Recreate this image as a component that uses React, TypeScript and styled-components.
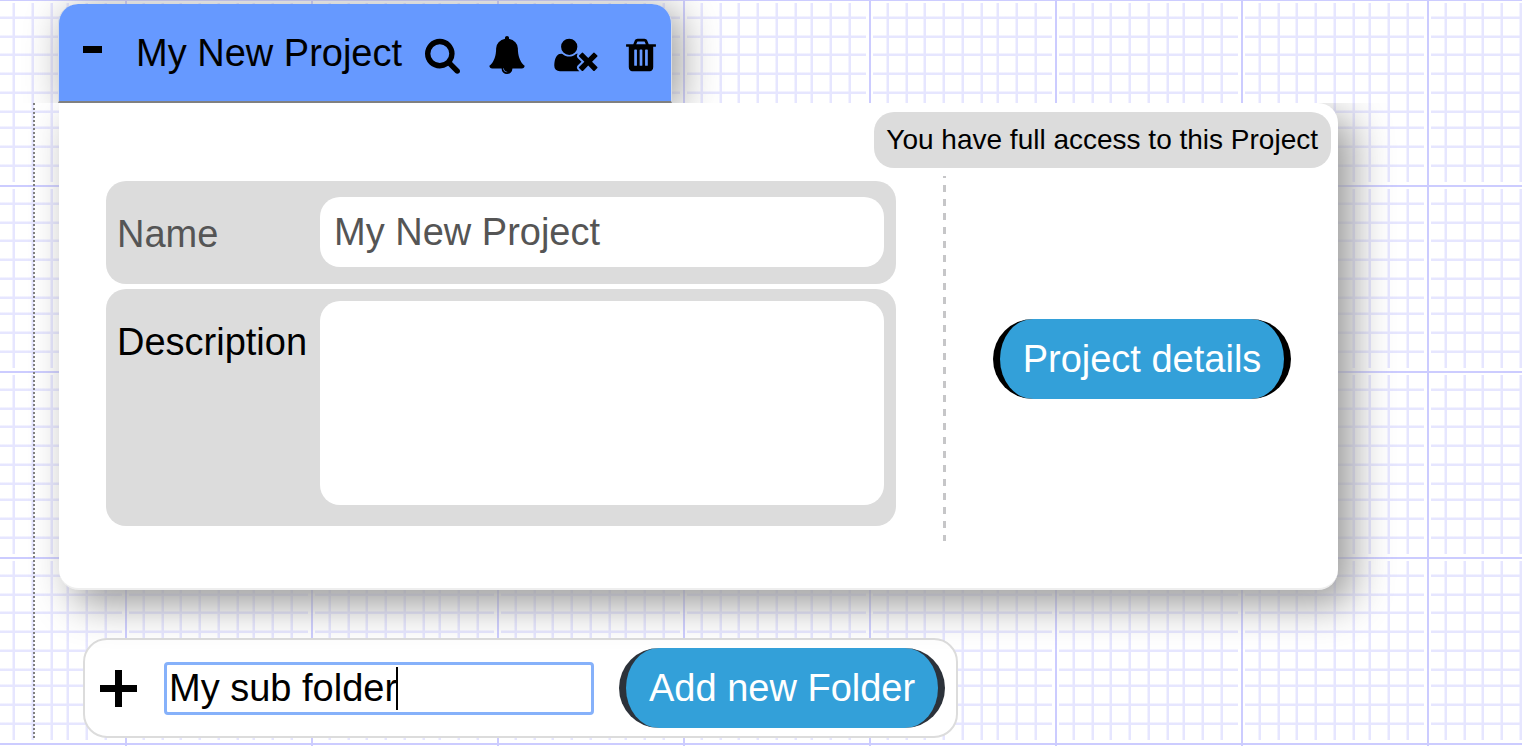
import React from "react";
import styled, { createGlobalStyle } from "styled-components";

const TILE = 186;
const MINOR_STOPS = [19, 38, 56, 75, 94, 113, 129, 148, 167];

const minorLines = (direction: string) => {
  const stops = MINOR_STOPS.map(
    (at) =>
      `transparent ${at - 2}px, rgba(230, 230, 255, 0.5) ${at - 2}px ${at - 1}px, #e6e6ff ${at - 1}px ${at + 1}px, transparent ${at + 1}px`
  ).join(", ");
  return `linear-gradient(${direction}, ${stops})`;
};

const majorLine = (direction: string) =>
  `linear-gradient(${direction}, #ccccff 2px, transparent 2px)`;

const clearance = (direction: string) =>
  `linear-gradient(${direction}, #fff 4px, transparent 4px, transparent ${TILE - 3}px, #fff ${TILE - 3}px)`;

const GlobalStyle = createGlobalStyle`
  *, *::before, *::after { box-sizing: border-box; }
  html { height: 100%; overflow: hidden; }
  body {
    margin: 0;
    min-height: 100%;
    font-family: "Liberation Sans", Arial, Helvetica, sans-serif;
    font-size: 38px;
    line-height: 44px;
    color: #000;
    background-color: #fff;
    background-image: ${majorLine("90deg")}, ${majorLine("180deg")},
      ${clearance("90deg")}, ${clearance("180deg")},
      ${minorLines("90deg")}, ${minorLines("180deg")};
    background-size: ${TILE}px ${TILE}px;
    background-position: 125px -1px;
  }
  button, input, textarea { font: inherit; }
`;

const Tree = styled.main`
  padding: 4px 184px 0 33px;
`;

const Tab = styled.header`
  display: flex;
  align-items: center;
  width: fit-content;
  height: 99px;
  margin-left: 25px;
  padding: 0 15px 0 24px;
  background: #6699ff;
  border: 1px solid #d5dbe8;
  border-width: 0 1px 2px;
  border-bottom-color: #808080;
  border-radius: 20px 20px 0 0;
  box-shadow: 8px 6px 40px #999;
  clip-path: inset(-60px -60px 0 -60px);
`;

const Title = styled.h1`
  margin: 0 23px 0 34px;
  font-size: 38px;
  font-weight: 400;
  line-height: 44px;
`;

const IconButton = styled.button`
  display: flex;
  padding: 0;
  border: 0;
  background: none;
  color: inherit;
  cursor: pointer;

  svg {
    display: block;
    fill: currentColor;
  }
`;

const Actions = styled.div`
  display: flex;
  gap: 28px;
  padding-top: 4px;
`;

const Branch = styled.div`
  border-left: 2px dotted #808080;
  padding-left: 24px;
`;

const Card = styled.section`
  display: grid;
  grid-template-columns: minmax(0, 840px) 1fr;
  grid-template-rows: auto 1fr;
  padding: 9px 7px 47px 47px;
  background: #fff;
  border-bottom: 2px solid #eee;
  border-radius: 0 20px 20px 20px;
  box-shadow: 14px 14px 40px #999;
  clip-path: inset(0 -80px -80px -80px);
`;

const AccessBadge = styled.p`
  grid-column: 1 / -1;
  justify-self: end;
  margin: 0 0 8px;
  padding: 0 13px 0 12px;
  border-radius: 20px;
  background: #dcdcdc;
  font-size: 28px;
  line-height: 56px;
`;

const Fields = styled.form`
  display: flex;
  flex-direction: column;
  gap: 5px;
  padding: 5px 50px 15px 0;
  background: repeating-linear-gradient(
      #c6c6c8 0 2px,
      transparent 2px 9px,
      #c6c6c8 9px 14px
    )
    right top / 3px 100% no-repeat;
`;

const Field = styled.div<{ $tall?: boolean }>`
  display: grid;
  grid-template-columns: 203px 1fr;
  padding: ${(p) => (p.$tall ? "12px 12px 21px 11px" : "16px 12px 17px 11px")};
  border-radius: 20px;
  background: #dcdcdc;
`;

const Label = styled.label<{ $muted?: boolean }>`
  padding-top: ${(p) => (p.$muted ? "15px" : "19px")};
  color: ${(p) => (p.$muted ? "#555" : "#000")};
`;

const TextInput = styled.input`
  min-width: 0;
  height: 70px;
  padding: 0 14px;
  border: 0;
  border-radius: 20px;
  background: #fff;
  color: #555;
`;

const TextArea = styled.textarea`
  min-width: 0;
  height: 204px;
  padding: 12px 14px;
  border: 0;
  border-radius: 20px;
  background: #fff;
  resize: none;
`;

const Side = styled.div`
  display: flex;
  align-items: center;
  justify-content: center;
  padding-left: 7px;
`;

const PillButton = styled.button<{ $edge: string }>`
  height: 80px;
  padding: 0 23px;
  border: 0 solid ${(p) => p.$edge};
  border-width: 0 7px;
  border-radius: 40px;
  background: #33a0d9;
  color: #fff;
  white-space: nowrap;
  cursor: pointer;
`;

const AddRow = styled.form`
  display: flex;
  align-items: center;
  width: fit-content;
  margin: 48px 0 0 24px;
  padding: 0 11px 0 15px;
  height: 100px;
  border: 2px solid #dcdcdc;
  border-radius: 24px;
  background: #fff;
`;

const FolderInput = styled.input`
  width: 430px;
  height: 53px;
  margin: 0 25px 0 27px;
  padding: 0 2px;
  border: 3px solid #86b1fa;
  border-radius: 4px;
  outline: 0;
  caret-color: transparent;
  background: linear-gradient(#000, #000) 229px 2px / 2px 43px no-repeat #fff;
`;

const TRASH_SLOTS = [704, 960, 1216]
  .map(
    (x) =>
      `M${x} 1376v-704q0-14-9-23t-23-9h-64q-14 0-23 9t-9 23v704q0 14 9 23t23 9h64q14 0 23-9t9-23z`
  )
  .join("");

export default function App() {
  return (
    <>
      <GlobalStyle />
      <Tree>
        <Tab>
          <IconButton type="button" aria-label="Collapse project">
            <svg width="19" height="16" viewBox="0 0 19 16">
              <path d="M0 1h19v7H0z" />
            </svg>
          </IconButton>
          <Title>My New Project</Title>
          <Actions>
            <IconButton type="button" aria-label="Search">
              <svg width="35" height="38" viewBox="64 0 1664 1792">
                <path d="M1216 832q0-185-131.500-316.500t-316.500-131.500-316.500 131.500-131.500 316.500 131.500 316.500 316.500 131.500 316.500-131.500 131.500-316.500zm512 832q0 52-38 90t-90 38q-54 0-90-38l-343-342q-179 124-399 124-143 0-273.500-55.500t-225-150-150-225-55.500-273.500 55.500-273.500 150-225 225-150 273.500-55.500 273.500 55.500 225 150 150 225 55.500 273.500q0 220-124 399l343 343q37 37 37 90z" />
              </svg>
            </IconButton>
            <IconButton type="button" aria-label="Notifications">
              <svg width="38" height="38" viewBox="0 0 1792 1792">
                <path d="M912 1696q0-16-16-16-59 0-101.500-42.500t-42.500-101.500q0-16-16-16t-16 16q0 73 51.500 124.500t124.500 51.500q16 0 16-16zm816-288q0 52-38 90t-90 38h-448q0 106-75 181t-181 75-181-75-75-181h-448q-52 0-90-38t-38-90q50-42 91-88t85-119.500 74.500-158.500 50-206 19.500-260q0-152 117-282.500t307-158.500q-8-19-8-39 0-40 28-68t68-28 68 28 28 68q0 20-8 39 190 28 307 158.500t117 282.500q0 139 19.500 260t50 206 74.500 158.500 85 119.500 91 88z" />
              </svg>
            </IconButton>
            <IconButton type="button" aria-label="Remove user">
              <svg width="44" height="38" viewBox="0 0 2048 1792">
                <path d="M704 896q-159 0-271.500-112.500T320 512t112.500-271.500T704 128t271.500 112.500T1088 512 975.500 783.500 704 896zm1077 320 249 249q9 9 9 23 0 13-9 22l-136 136q-9 9-22 9-14 0-23-9l-249-249-249 249q-9 9-23 9-13 0-22-9l-136-136q-9-9-9-22 0-14 9-23l249-249-249-249q-9-9-9-23 0-13 9-22l136-136q9-9 22-9 14 0 23 9l249 249 249-249q9-9 23-9 13 0 22 9l136 136q9 9 9 22 0 14-9 23zm-498 0-181 181q-37 37-37 91 0 53 37 90l83 83q-21 3-44 3H267q-121 0-194-69T0 1405q0-53 3.500-103.500t14-109T44 1084t43-97.500 62-81 85.500-53.500T346 832q19 0 39 17 79 61 154.500 91.500T704 971t164.500-30.500T1023 849q20-17 39-17 33 0 65 6L1102 853q-37 37-37 90 0 54 37 91z" />
              </svg>
            </IconButton>
            <IconButton type="button" aria-label="Delete project">
              <svg width="30" height="38" viewBox="192 0 1408 1792">
                <path
                  fillRule="evenodd"
                  d={`${TRASH_SLOTS}M672 384h448l-48-117q-7-9-17-11h-317q-10 2-17 11zM1600 416v64q0 14-9 23t-23 9h-96v948q0 83-47 143.500t-113 60.500h-832q-66 0-113-58.500t-47-141.500v-952h-96q-14 0-23-9t-9-23v-64q0-14 9-23t23-9h309l70-167q15-37 54-63t79-26h320q40 0 79 26t54 63l70 167h309q14 0 23 9t9 23z`}
                />
              </svg>
            </IconButton>
          </Actions>
        </Tab>
        <Branch>
          <Card>
            <AccessBadge>You have full access to this Project</AccessBadge>
            <Fields>
              <Field>
                <Label htmlFor="project-name" $muted>
                  Name
                </Label>
                <TextInput id="project-name" defaultValue="My New Project" />
              </Field>
              <Field $tall>
                <Label htmlFor="project-description">Description</Label>
                <TextArea id="project-description" />
              </Field>
            </Fields>
            <Side>
              <PillButton type="button" $edge="#000">
                Project details
              </PillButton>
            </Side>
          </Card>
          <AddRow>
            <IconButton type="button" aria-label="Add">
              <svg width="37" height="37" viewBox="0 0 37 37">
                <path d="M15 0h7v15h15v7H22v15h-7V22H0v-7h15z" />
              </svg>
            </IconButton>
            <FolderInput aria-label="Folder name" defaultValue="My sub folder" />
            <PillButton type="button" $edge="#2c323a">
              Add new Folder
            </PillButton>
          </AddRow>
        </Branch>
      </Tree>
    </>
  );
}
